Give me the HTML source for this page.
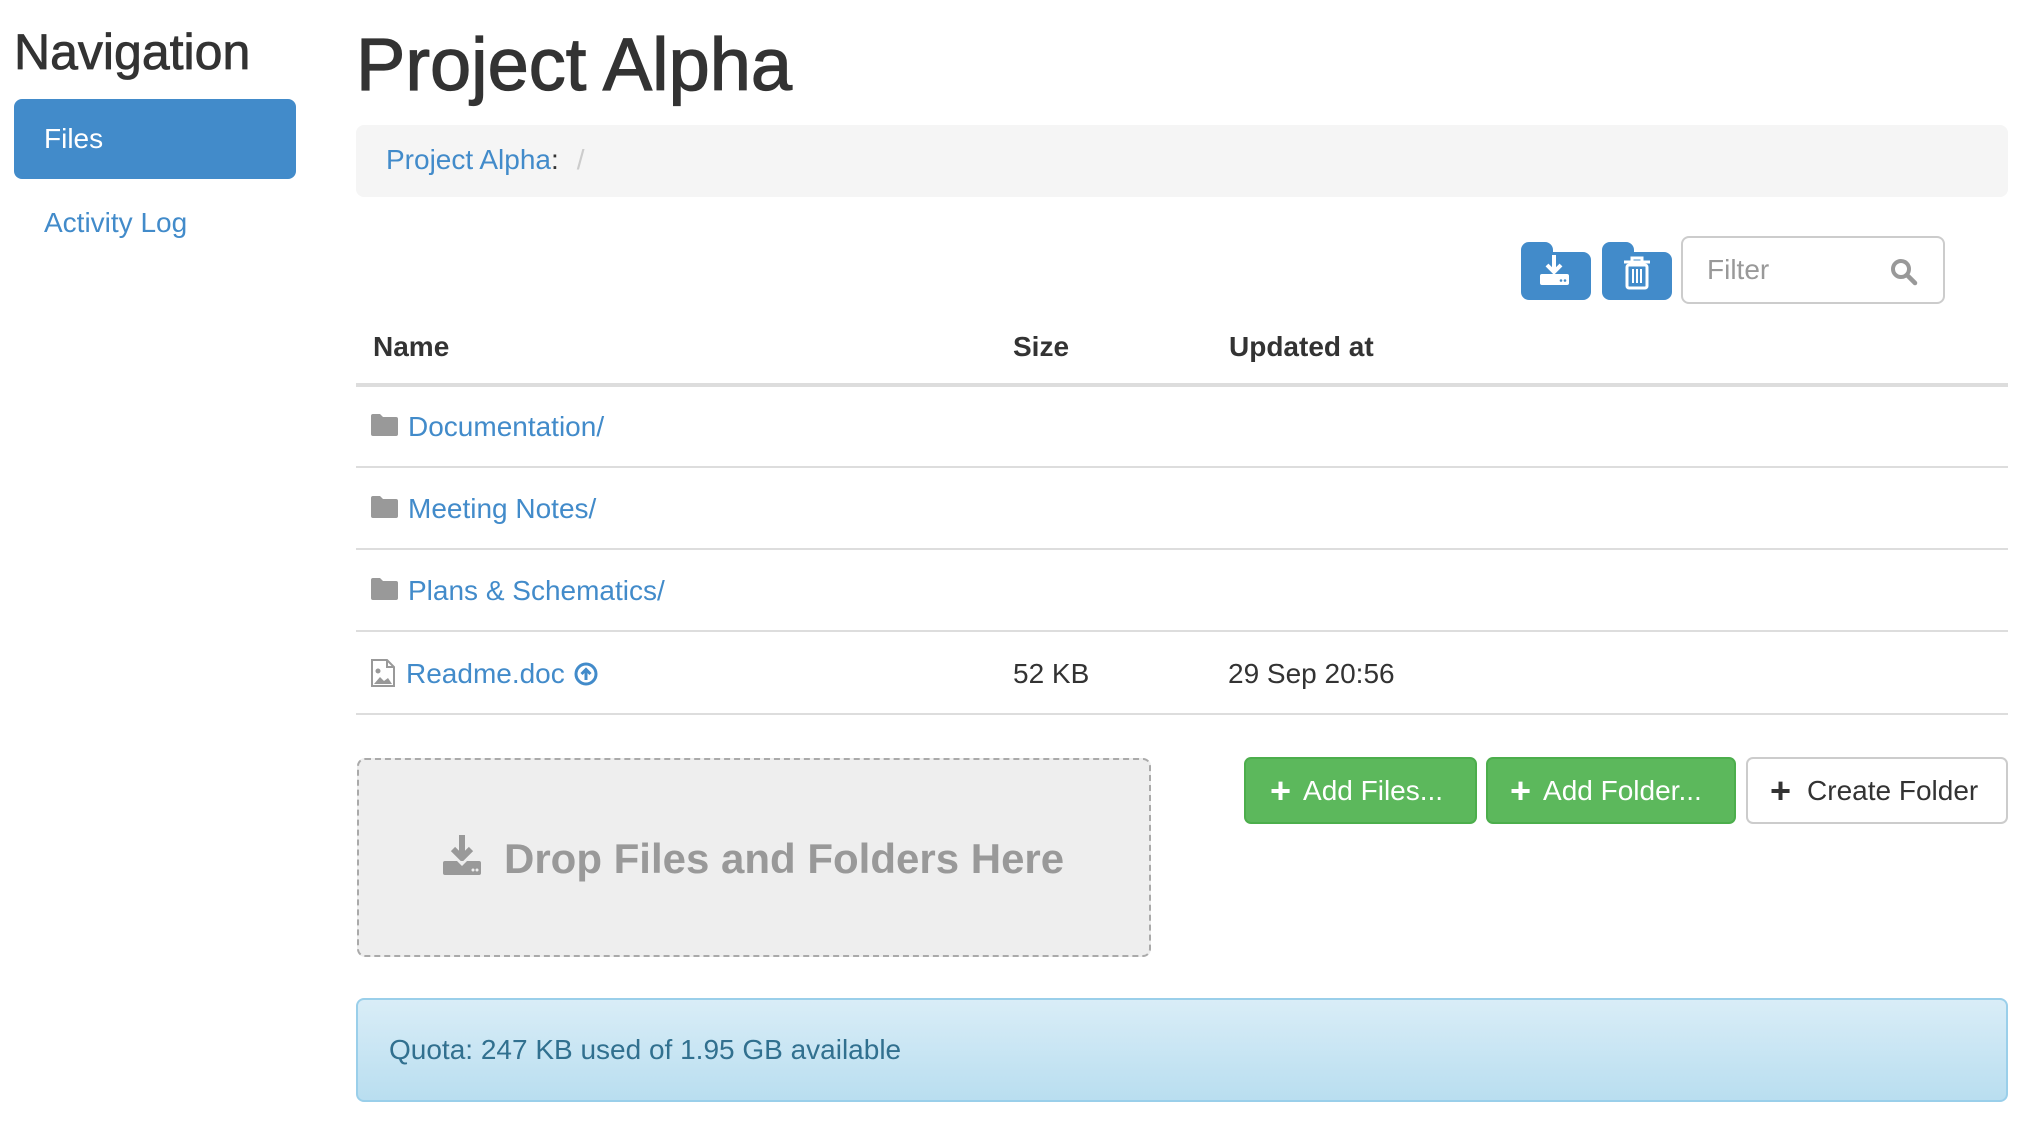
<!DOCTYPE html>
<html><head><meta charset="utf-8"><style>
*{margin:0;padding:0;box-sizing:border-box}
body{width:2024px;height:1122px;background:#fff;font-family:"Liberation Sans",Arial,sans-serif;color:#333;position:relative;overflow:hidden}
.a{position:absolute;white-space:nowrap}
.link{color:#428bca}
.row{position:absolute;left:356px;width:1652px;height:2px;background:#ddd}
.btn{position:absolute;border-radius:7px;font-size:28px;display:flex;align-items:center}
.green{background:#5cb85c;border:2px solid #4cae4c;color:#fff}
</style></head><body>
<div class="a" style="left:14px;top:22px;font-size:50px;line-height:60px;color:#333;-webkit-text-stroke:0.8px #333">Navigation</div>
<div class="a" style="left:14px;top:99px;width:282px;height:80px;background:#428bca;border-radius:8px;color:#fff;font-size:28px;line-height:80px;padding-left:30px">Files</div>
<div class="a link" style="left:44px;top:205px;font-size:28px;line-height:36px">Activity Log</div>

<div class="a" style="left:356px;top:20px;font-size:74px;line-height:90px;color:#333;-webkit-text-stroke:1.2px #333">Project Alpha</div>
<div class="a" style="left:356px;top:125px;width:1652px;height:72px;background:#f5f5f5;border-radius:8px"></div>
<div class="a" style="left:386px;top:142px;font-size:28px;line-height:36px"><span class="link">Project Alpha</span>:<span style="color:#ccc;margin-left:18px">/</span></div>

<svg class="a" style="left:1521px;top:242px" width="70" height="58" viewBox="0 0 70 58"><path d="M8 0h16a8 8 0 0 1 8 8v2h30a8 8 0 0 1 8 8v32a8 8 0 0 1-8 8H8a8 8 0 0 1-8-8V8a8 8 0 0 1 8-8z" fill="#428bca"/><path d="M33 13v16M26 23l7 7 7-7" stroke="#fff" stroke-width="4" fill="none"/><rect x="19" y="32" width="29" height="11" rx="2" fill="#fff"/><path d="M19 32h11l3 4 3-4h12" fill="#fff"/><circle cx="40" cy="38.5" r="1.3" fill="#428bca"/><circle cx="44" cy="38.5" r="1.3" fill="#428bca"/></svg>
<svg class="a" style="left:1602px;top:242px" width="70" height="58" viewBox="0 0 70 58"><path d="M8 0h16a8 8 0 0 1 8 8v2h30a8 8 0 0 1 8 8v32a8 8 0 0 1-8 8H8a8 8 0 0 1-8-8V8a8 8 0 0 1 8-8z" fill="#428bca"/><path d="M22 20h26M30 20v-4h10v4" stroke="#fff" stroke-width="3" fill="none"/><rect x="25" y="23" width="20" height="23" rx="2" stroke="#fff" stroke-width="3" fill="none"/><path d="M31 27v14M35 27v14M39 27v14" stroke="#fff" stroke-width="2"/></svg>
<div class="a" style="left:1681px;top:236px;width:264px;height:68px;border:2px solid #ccc;border-radius:8px;font-size:28px;line-height:64px;color:#999;padding-left:24px">Filter</div>
<svg class="a" style="left:1890px;top:258px" width="28" height="28" viewBox="0 0 28 28"><circle cx="11" cy="11" r="8" stroke="#999" stroke-width="4" fill="none"/><path d="M17 17l8 8" stroke="#999" stroke-width="4.5" stroke-linecap="round"/></svg>

<div class="a" style="left:373px;top:329px;font-size:28px;line-height:36px;font-weight:bold">Name</div>
<div class="a" style="left:1013px;top:329px;font-size:28px;line-height:36px;font-weight:bold">Size</div>
<div class="a" style="left:1229px;top:329px;font-size:28px;line-height:36px;font-weight:bold">Updated at</div>
<div class="row" style="top:383px;height:4px"></div>
<div class="row" style="top:466px"></div>
<div class="row" style="top:548px"></div>
<div class="row" style="top:630px"></div>
<div class="row" style="top:713px"></div>

<svg class="a" style="left:371px;top:414px" width="27" height="22" viewBox="0 0 27 22"><path d="M2 0h7l3 3h13a2 2 0 0 1 2 2v15a2 2 0 0 1-2 2H2a2 2 0 0 1-2-2V2a2 2 0 0 1 2-2z" fill="#999"/></svg>
<div class="a link" style="left:408px;top:409px;font-size:28px;line-height:36px">Documentation/</div>
<svg class="a" style="left:371px;top:496px" width="27" height="22" viewBox="0 0 27 22"><path d="M2 0h7l3 3h13a2 2 0 0 1 2 2v15a2 2 0 0 1-2 2H2a2 2 0 0 1-2-2V2a2 2 0 0 1 2-2z" fill="#999"/></svg>
<div class="a link" style="left:408px;top:491px;font-size:28px;line-height:36px">Meeting Notes/</div>
<svg class="a" style="left:371px;top:578px" width="27" height="22" viewBox="0 0 27 22"><path d="M2 0h7l3 3h13a2 2 0 0 1 2 2v15a2 2 0 0 1-2 2H2a2 2 0 0 1-2-2V2a2 2 0 0 1 2-2z" fill="#999"/></svg>
<div class="a link" style="left:408px;top:573px;font-size:28px;line-height:36px">Plans &amp; Schematics/</div>
<svg class="a" style="left:371px;top:659px" width="24" height="28" viewBox="0 0 24 28"><path d="M1 1h15l7 7v19H1z" fill="#fff" stroke="#999" stroke-width="2"/><path d="M16 1v7h7" fill="none" stroke="#999" stroke-width="2"/><circle cx="7" cy="12" r="2.5" fill="#999"/><path d="M3 25l6-7 4 4 4-3 4 6z" fill="#999"/></svg>
<div class="a link" style="left:406px;top:656px;font-size:28px;line-height:36px">Readme.doc</div>
<svg class="a" style="left:574px;top:662px" width="24" height="24" viewBox="0 0 24 24"><circle cx="12" cy="12" r="10" stroke="#428bca" stroke-width="3" fill="none"/><path d="M12 18V8M7.5 12l4.5-4.5 4.5 4.5" stroke="#428bca" stroke-width="3" fill="none"/></svg>
<div class="a" style="left:1013px;top:656px;font-size:28px;line-height:36px">52 KB</div>
<div class="a" style="left:1228px;top:656px;font-size:28px;line-height:36px">29 Sep 20:56</div>

<div class="a" style="left:357px;top:758px;width:794px;height:199px;background:#eee;border:2px dashed #aaa;border-radius:8px"></div>
<svg class="a" style="left:442px;top:835px" width="40" height="40" viewBox="0 0 40 40"><path d="M20 0v22M11 14l9 9 9-9" stroke="#999" stroke-width="6" fill="none"/><rect x="1" y="26" width="38" height="14" rx="2" fill="#999"/><path d="M1 26h14l5 5 5-5h14" fill="#eee"/><circle cx="31" cy="35" r="1.5" fill="#eee"/><circle cx="35" cy="35" r="1.5" fill="#eee"/></svg>
<div class="a" style="left:504px;top:831px;font-size:42px;line-height:56px;font-weight:bold;color:#999">Drop Files and Folders Here</div>

<div class="btn green" style="left:1244px;top:757px;width:233px;height:67px;padding-left:24px"><b style="font-size:36px;margin-right:12px;line-height:1">+</b>Add Files...</div>
<div class="btn green" style="left:1486px;top:757px;width:250px;height:67px;padding-left:22px"><b style="font-size:36px;margin-right:12px;line-height:1">+</b>Add Folder...</div>
<div class="btn" style="left:1746px;top:757px;width:262px;height:67px;border:2px solid #ccc;padding-left:22px;color:#333;background:#fff"><b style="font-size:36px;margin-right:16px;line-height:1">+</b>Create Folder</div>

<div class="a" style="left:356px;top:998px;width:1652px;height:104px;border:2px solid #9acfea;border-radius:8px;background:linear-gradient(#d9edf7,#b9def0);color:#31708f;font-size:28px;line-height:100px;padding-left:31px">Quota: 247 KB used of 1.95 GB available</div>
</body></html>
